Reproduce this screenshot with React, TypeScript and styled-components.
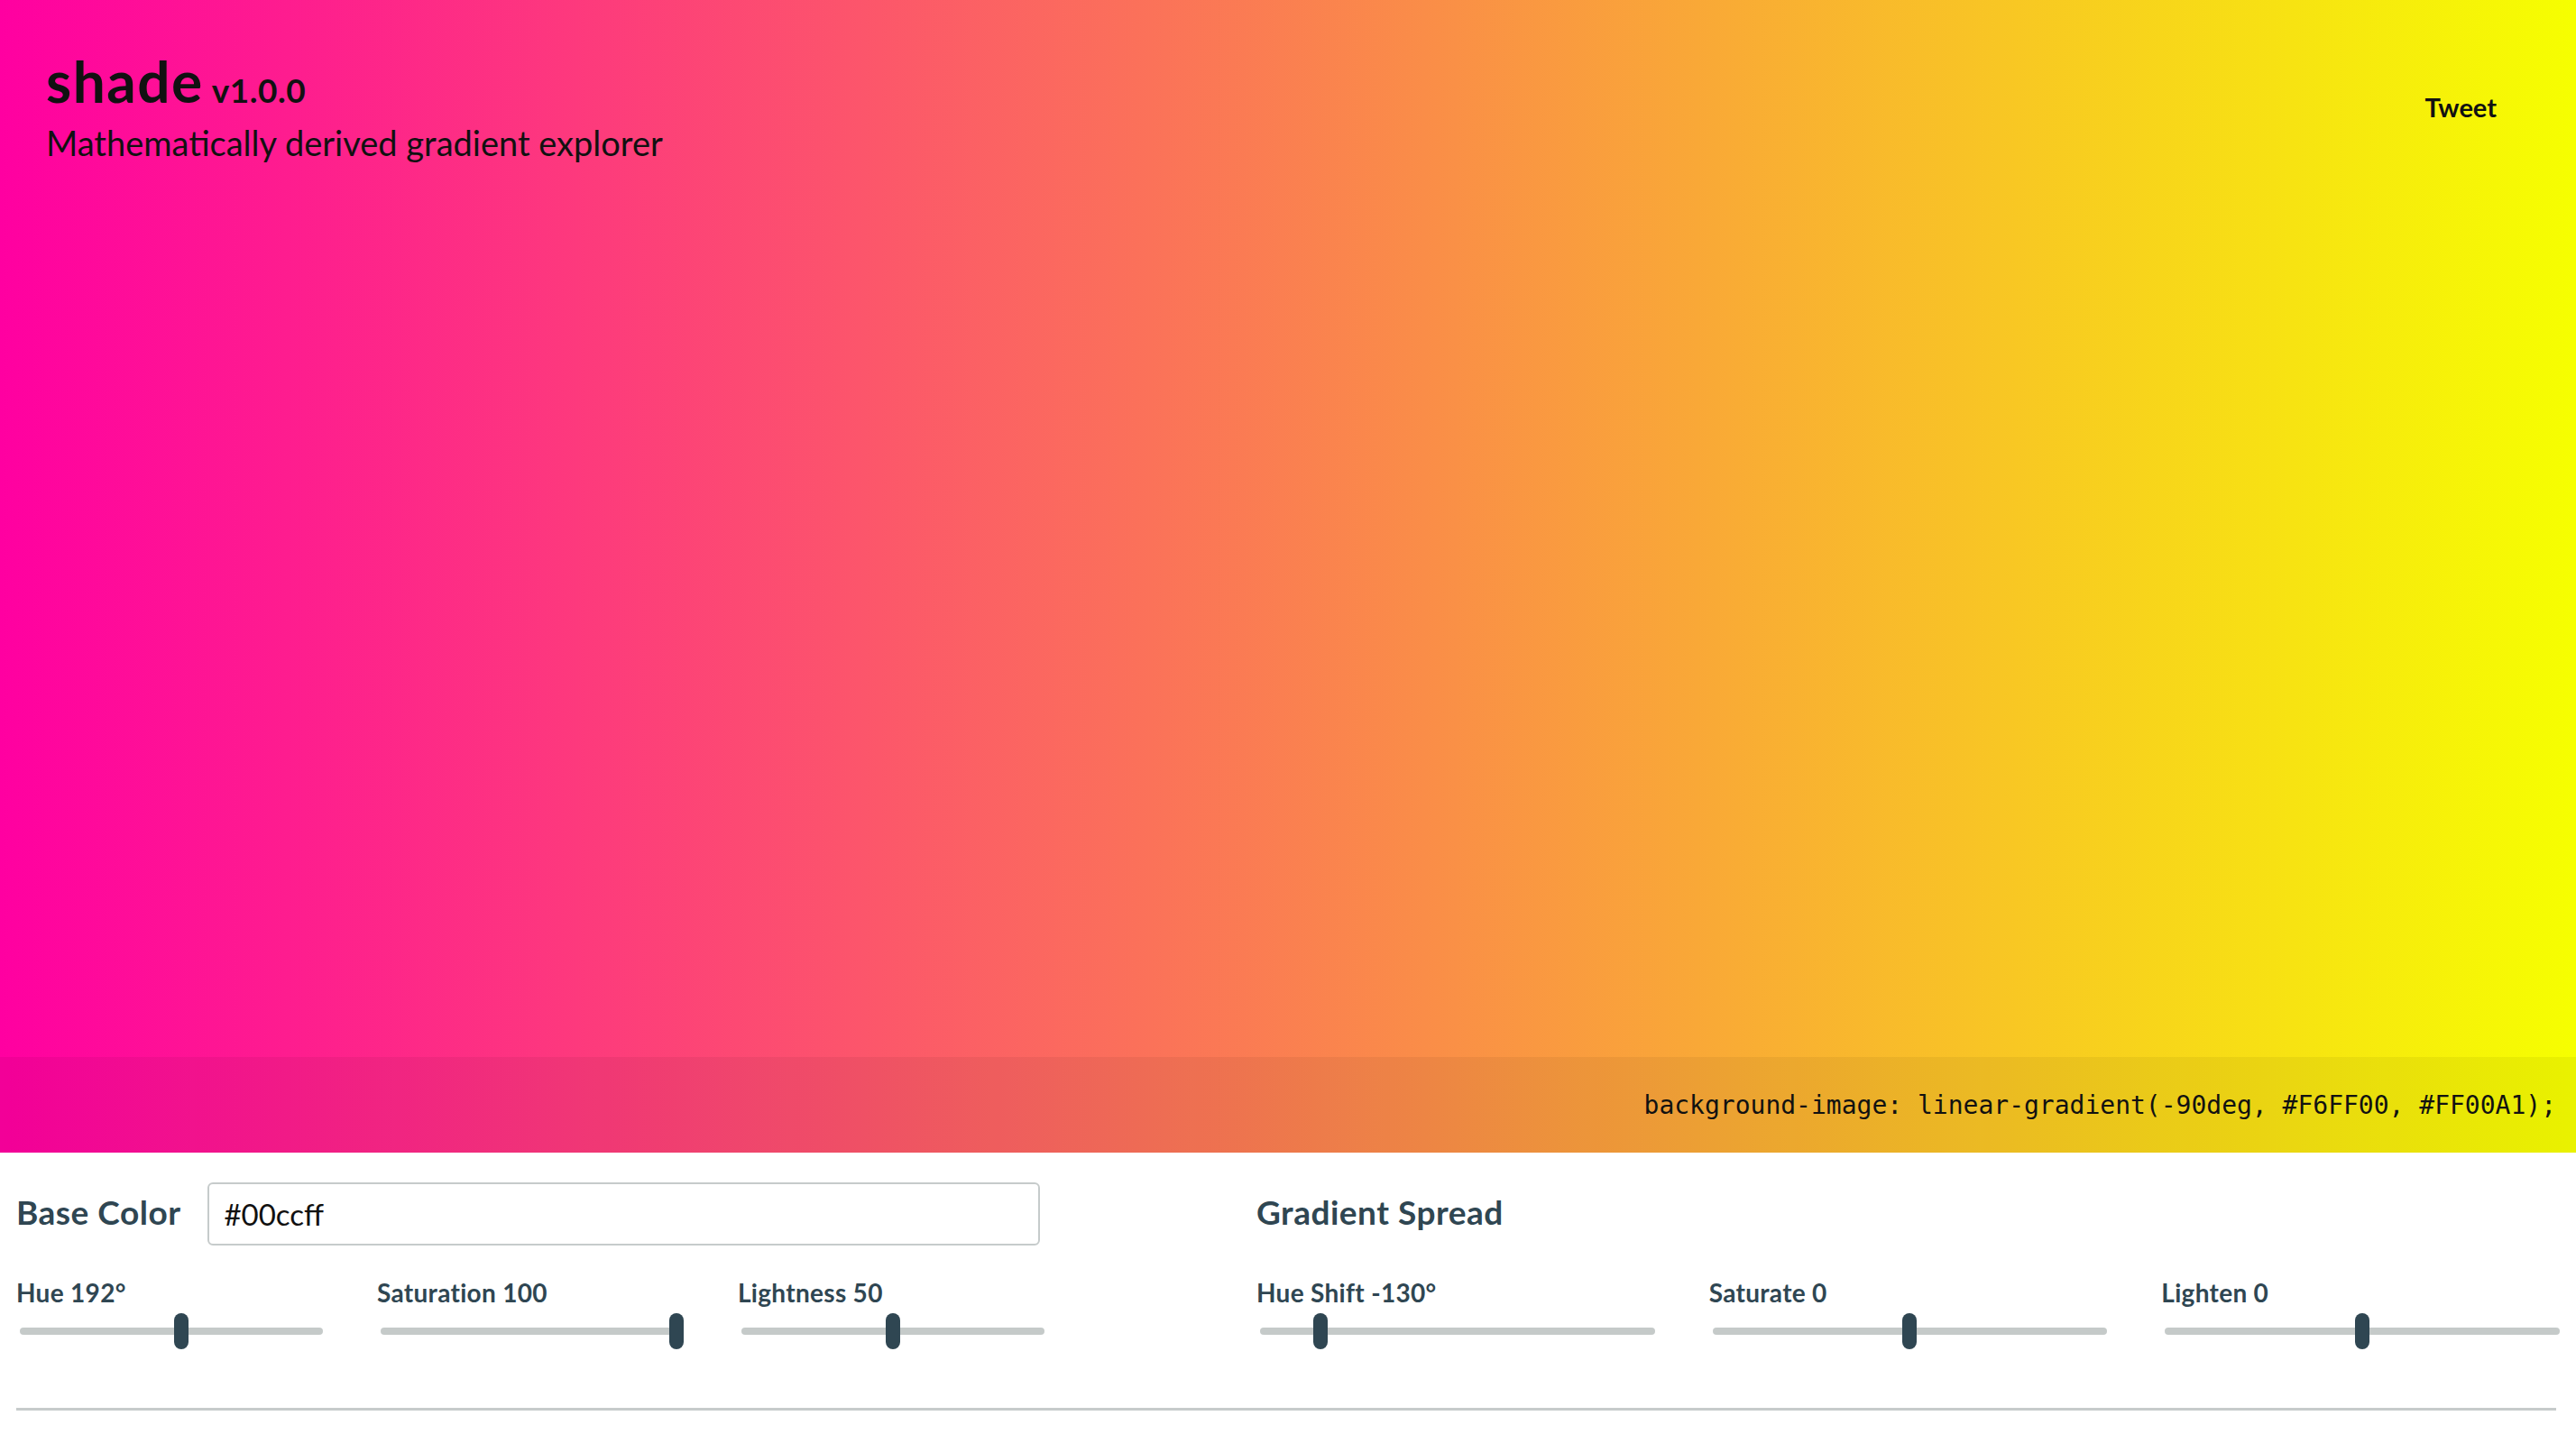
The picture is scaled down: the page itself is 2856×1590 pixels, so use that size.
import React, { useState } from "react";
import styled, { createGlobalStyle } from "styled-components";

const GlobalStyle = createGlobalStyle`
  html, body {
    margin: 0;
    padding: 0;
    background: #ffffff;
  }
  body {
    font-family: Lato, "Noto Sans", sans-serif;
    overflow-x: hidden;
  }
  * { box-sizing: border-box; }
`;

const INK = "#2f4652";

const Hero = styled.section<{ $from: string; $to: string }>`
  height: 1278px;
  display: flex;
  flex-direction: column;
  background-image: linear-gradient(-90deg, ${(p) => p.$from}, ${(p) => p.$to});
`;

const Header = styled.header`
  flex: 1;
  display: flex;
  justify-content: space-between;
  align-items: flex-start;
  padding: 0 88px 0 51px;
`;

const TitleBlock = styled.div`
  display: flex;
  flex-direction: column;
`;

const Title = styled.h1`
  margin: 58px 0 0;
  display: flex;
  align-items: baseline;
  font-size: 64px;
  font-weight: 700;
  letter-spacing: 1.5px;
  line-height: 1;
  color: #111111;
`;

const Version = styled.span`
  margin-left: 9px;
  font-size: 37px;
  font-weight: 700;
  letter-spacing: 0.5px;
`;

const Subtitle = styled.p`
  margin: 14px 0 0;
  font-size: 38px;
  font-weight: 400;
  line-height: 1.2;
  color: #111111;
`;

const TweetLink = styled.a`
  margin-top: 102px;
  font-size: 29px;
  font-weight: 700;
  line-height: 1.2;
  color: #111111;
  text-decoration: none;
`;

const CodeBar = styled.div`
  height: 106px;
  display: flex;
  justify-content: flex-end;
  align-items: center;
  padding: 0 22px;
  background: rgba(0, 0, 0, 0.05);
`;

const Code = styled.code`
  font-family: "DejaVu Sans Mono", "Liberation Mono", monospace;
  font-size: 28px;
  color: #111111;
`;

const Controls = styled.section`
  padding: 33px 18px 0;
`;

const Panels = styled.div`
  display: grid;
  grid-template-columns: 1140px 1fr;
  column-gap: 235px;
`;

const Panel = styled.div`
  display: flex;
  flex-direction: column;
`;

const HeadingRow = styled.div`
  height: 70px;
  display: flex;
  align-items: center;
`;

const Heading = styled.h2`
  margin: 0;
  padding-bottom: 5px;
  font-size: 37px;
  font-weight: 700;
  letter-spacing: 0.5px;
  color: ${INK};
  white-space: nowrap;
`;

const ColorInput = styled.input`
  flex: 1;
  height: 70px;
  margin: 0 5px 0 30px;
  padding: 0 16px;
  border: 2px solid #c6cbcb;
  border-radius: 6px;
  font-family: Lato, "Noto Sans", sans-serif;
  font-size: 33px;
  color: #111111;
  background: #ffffff;
  outline: none;
`;

const SliderGrid = styled.div`
  margin-top: 36px;
  display: grid;
  grid-template-columns: repeat(3, 1fr);
  column-gap: 60px;
`;

const SliderField = styled.label`
  display: flex;
  flex-direction: column;
`;

const SliderLabel = styled.span`
  font-size: 28px;
  font-weight: 700;
  letter-spacing: 0.3px;
  line-height: 1.2;
  color: ${INK};
  white-space: nowrap;
`;

const Range = styled.input`
  -webkit-appearance: none;
  appearance: none;
  width: calc(100% - 4px);
  height: 40px;
  margin: 5px 0 0 4px;
  padding: 0;
  background: transparent;
  outline: none;

  &::-webkit-slider-runnable-track {
    height: 8px;
    border-radius: 4px;
    background: #c5cac9;
  }
  &::-webkit-slider-thumb {
    -webkit-appearance: none;
    appearance: none;
    width: 16px;
    height: 40px;
    margin-top: -16px;
    border: none;
    border-radius: 8px;
    background: ${INK};
    cursor: pointer;
  }
  &::-moz-range-track {
    height: 8px;
    border-radius: 4px;
    background: #c5cac9;
  }
  &::-moz-range-thumb {
    width: 16px;
    height: 40px;
    border: none;
    border-radius: 8px;
    background: ${INK};
  }
`;

const Rule = styled.hr`
  margin: 65px 4px 0 0;
  height: 3px;
  border: none;
  background: #c6cbcb;
`;

type SliderDef = {
  key: string;
  label: (v: number) => string;
  min: number;
  max: number;
};

const baseSliders: SliderDef[] = [
  { key: "hue", label: (v) => `Hue ${v}°`, min: 0, max: 360 },
  { key: "saturation", label: (v) => `Saturation ${v}`, min: 0, max: 100 },
  { key: "lightness", label: (v) => `Lightness ${v}`, min: 0, max: 100 },
];

const spreadSliders: SliderDef[] = [
  { key: "hueShift", label: (v) => `Hue Shift ${v}°`, min: -180, max: 180 },
  { key: "saturate", label: (v) => `Saturate ${v}`, min: -100, max: 100 },
  { key: "lighten", label: (v) => `Lighten ${v}`, min: -100, max: 100 },
];

export default function App() {
  const [base, setBase] = useState("#00ccff");
  const [values, setValues] = useState<Record<string, number>>({
    hue: 192,
    saturation: 100,
    lightness: 50,
    hueShift: -130,
    saturate: 0,
    lighten: 0,
  });

  const from = "#F6FF00";
  const to = "#FF00A1";

  const renderSliders = (defs: SliderDef[]) =>
    defs.map((d) => (
      <SliderField key={d.key}>
        <SliderLabel>{d.label(values[d.key])}</SliderLabel>
        <Range
          type="range"
          min={d.min}
          max={d.max}
          value={values[d.key]}
          onChange={(e) =>
            setValues((prev) => ({ ...prev, [d.key]: Number(e.target.value) }))
          }
        />
      </SliderField>
    ));

  return (
    <>
      <GlobalStyle />
      <Hero $from={from} $to={to}>
        <Header>
          <TitleBlock>
            <Title>
              shade<Version>v1.0.0</Version>
            </Title>
            <Subtitle>Mathematically derived gradient explorer</Subtitle>
          </TitleBlock>
          <TweetLink href="#">Tweet</TweetLink>
        </Header>
        <CodeBar>
          <Code>{`background-image: linear-gradient(-90deg, ${from}, ${to});`}</Code>
        </CodeBar>
      </Hero>
      <Controls>
        <Panels>
          <Panel>
            <HeadingRow>
              <Heading>Base Color</Heading>
              <ColorInput value={base} onChange={(e) => setBase(e.target.value)} />
            </HeadingRow>
            <SliderGrid>{renderSliders(baseSliders)}</SliderGrid>
          </Panel>
          <Panel>
            <HeadingRow>
              <Heading>Gradient Spread</Heading>
            </HeadingRow>
            <SliderGrid>{renderSliders(spreadSliders)}</SliderGrid>
          </Panel>
        </Panels>
        <Rule />
      </Controls>
    </>
  );
}
